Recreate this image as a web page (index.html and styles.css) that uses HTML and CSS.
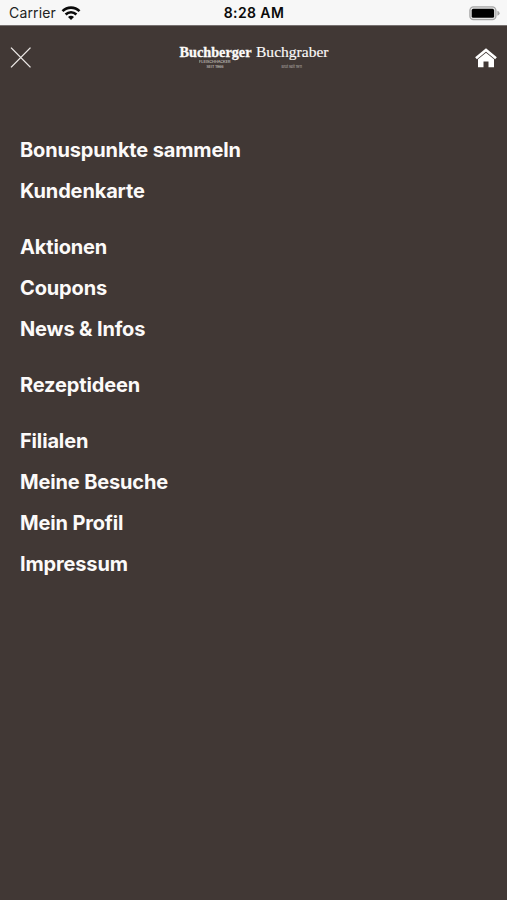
FILE: index.html
```html
<!DOCTYPE html>
<html lang="de">
<head>
<meta charset="utf-8">
<title>Buchberger Buchgraber</title>
<link rel="stylesheet" href="styles.css">
</head>
<body>
<div class="status">
  <div class="carrier"><span>Carrier</span>
    <svg width="20" height="15" viewBox="0 0 20 15" fill="none" stroke="#0a0a0a" stroke-width="2.6"><path d="M1.5 5.2C6.3.4 13.7.4 18.5 5.2M4.6 8.5C7.7 5.5 12.3 5.5 15.4 8.5"/><path d="M7 10.9C8.7 9.3 11.3 9.3 13 10.9L10 14Z" fill="#0a0a0a" stroke="none"/></svg>
  </div>
  <time class="time">8:28 AM</time>
  <svg class="battery" width="31" height="15" viewBox="0 0 31 15"><rect x=".9" y=".9" width="26" height="12.7" rx="3.6" fill="#e4e4e4" stroke="#a6a6a6" stroke-width="1.3"/><rect x="2.7" y="2.8" width="22.4" height="9" rx="1.6" fill="#000"/><path d="M28.4 4.8Q30.6 5.5 30.6 7.3T28.4 9.8Z" fill="#a6a6a6"/></svg>
</div>
<header class="bar">
  <svg class="close" width="22" height="22" viewBox="0 0 22 22"><path d="M1 .6L20.5 20.4M20.5 .6L1 20.4" stroke="#eeeae8" stroke-width="1.35"/></svg>
  <svg class="logo" width="152" height="26" viewBox="0 0 152 26">
    <text class="bold" x="1.5" y="11.5" textLength="72" lengthAdjust="spacingAndGlyphs">Buchberger</text>
    <text class="light" x="78" y="12" textLength="72.5" lengthAdjust="spacingAndGlyphs">Buchgraber</text>
    <text class="tiny" x="21" y="18.3" textLength="31.5" lengthAdjust="spacingAndGlyphs">FLEISCHHACKER</text>
    <text class="tiny" x="28.5" y="22.7" textLength="17" lengthAdjust="spacingAndGlyphs">SEIT 1966</text>
    <text class="tiny faint" x="103.5" y="22.7" textLength="20.5" lengthAdjust="spacingAndGlyphs">Brot seit 1911</text>
  </svg>
  <svg class="home" width="22" height="20" viewBox="0 0 22 20"><path d="M1 10.2L11 1.9L21 10.2" fill="none" stroke="#fff" stroke-width="2.7"/><path d="M3 11.3L11 4.8L19 11.3V19.2H13.5V13.6H8.5V19.2H3Z" fill="#fff"/></svg>
</header>
<nav class="menu">
  <ul><li>Bonuspunkte sammeln</li><li>Kundenkarte</li></ul>
  <ul><li>Aktionen</li><li>Coupons</li><li>News &amp; Infos</li></ul>
  <ul><li>Rezeptideen</li></ul>
  <ul><li>Filialen</li><li>Meine Besuche</li><li>Mein Profil</li><li>Impressum</li></ul>
</nav>
</body>
</html>
```
FILE: styles.css
```css
* { box-sizing: border-box; }
body {
  margin: 0;
  height: 900px;
  overflow: hidden;
  background: #413835;
  color: #fcfaf9;
  font-family: Inter, "Liberation Sans", sans-serif;
}
svg { display: block; }
.status {
  display: grid;
  grid-template-columns: 1fr auto 1fr;
  align-items: center;
  height: 26px;
  padding: 1px 7px 0 8px;
  background: #f7f7f7;
  border-bottom: 1px solid #777170;
  color: #222;
  font-size: 14px;
  line-height: 24px;
}
.carrier { display: flex; align-items: center; gap: 5px; padding-left: 1px; letter-spacing: 0.15px; }
.time { color: #0a0a0a; font-weight: 600; letter-spacing: 0.4px; }
.battery { justify-self: end; }
.bar {
  display: grid;
  grid-template-columns: 1fr auto 1fr;
  align-items: center;
  height: 63px;
  padding: 0 10px;
}
.home { justify-self: end; }
.logo { fill: #fcfaf9; }
.bold { font: 700 14px "Liberation Serif", serif; stroke: #fcfaf9; stroke-width: 0.3px; }
.light { font: 400 15px "Liberation Serif", serif; stroke: #fcfaf9; stroke-width: 0.15px; }
.tiny { font: 400 3.8px Inter, sans-serif; opacity: 0.8; }
.faint { opacity: 0.6; }
.menu {
  display: flex;
  flex-direction: column;
  gap: 15px;
  padding: 41.4px 20px 0;
}
.menu ul { margin: 0; padding: 0; list-style: none; }
.menu li {
  height: 40.95px;
  font-size: 20px;
  font-weight: 650;
  letter-spacing: -0.15px;
  line-height: 40.95px;
}
```
